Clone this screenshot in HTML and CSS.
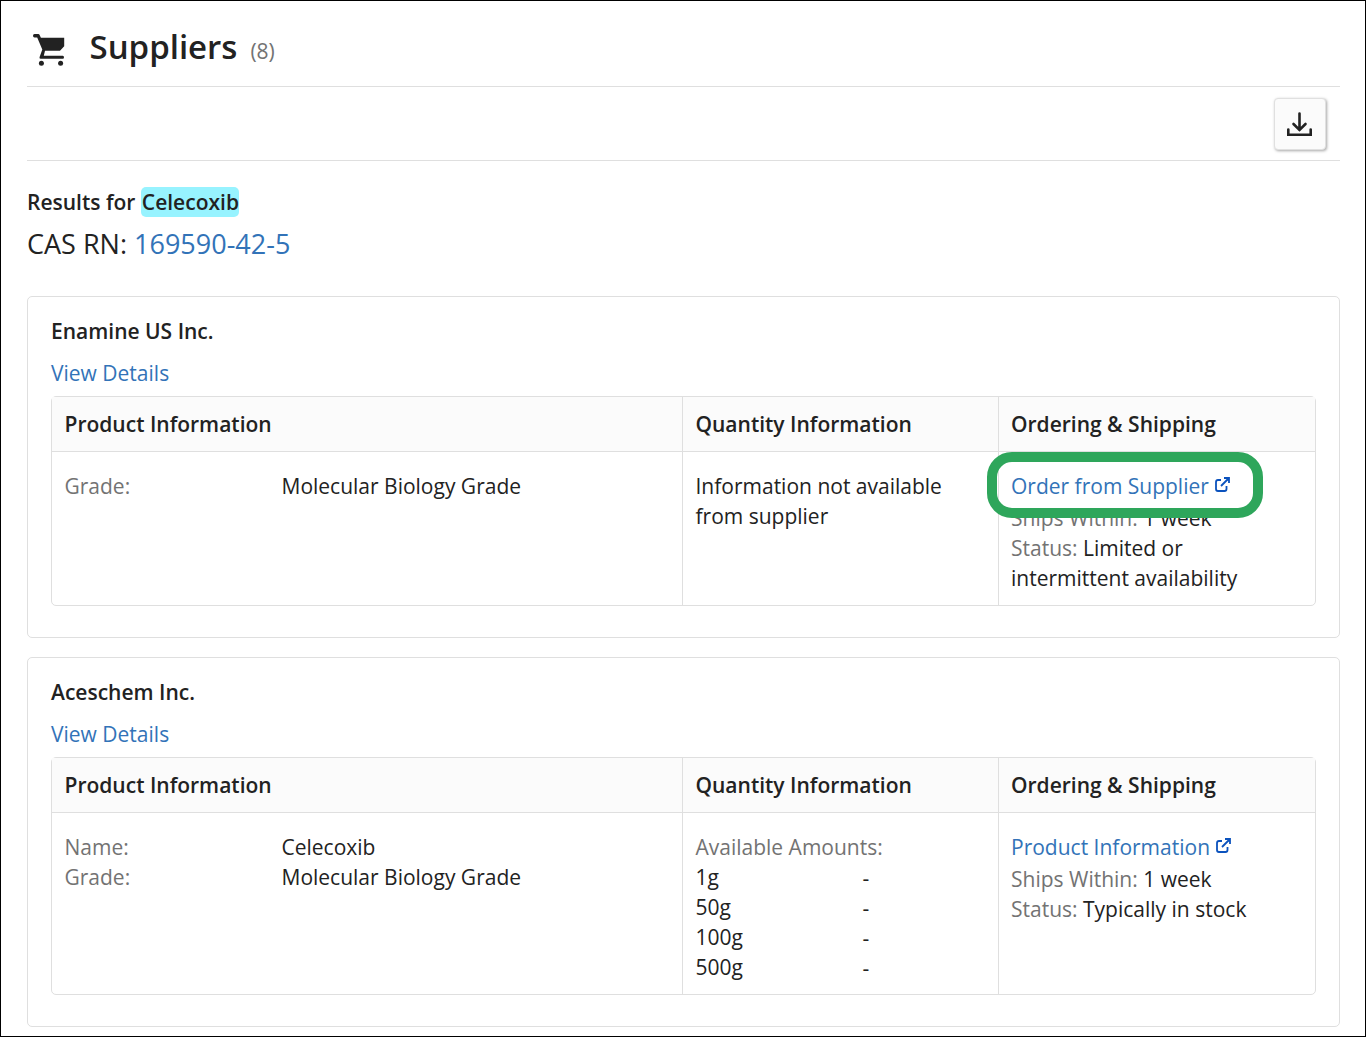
FILE: index.html
```html
<!DOCTYPE html>
<html lang="en">
<head>
    <meta charset="UTF-8">
    <meta name="viewport" content="width=device-width, initial-scale=1.0">
    <title>Suppliers</title>
    <link rel="stylesheet" href="styles.css">
</head>
<body>
    <div class="page">
        <header class="page-header">
            <svg class="cart-icon" viewBox="0 0 32 32">
                <path d="M1.5 0H5.3Q6.2 0 6.5 0.8L7.9 3.8H31.2V12.2L27 16.7H12L10.8 21.7H29.8Q31 21.7 31 23.2Q31 24.7 29.8 24.7H7.5Q6 24.7 6.6 23L9.3 15.5L4.2 3.4H1.5Q0 3.4 0 1.7Q0 0 1.5 0Z"/>
                <circle cx="8.4" cy="29.3" r="2.5"/>
                <circle cx="27.6" cy="29.3" r="2.5"/>
            </svg>
            <h1 class="title">Suppliers</h1>
            <span class="count">(8)</span>
        </header>

        <div class="toolbar">
            <button class="download-button">
                <svg class="download-icon" viewBox="0 0 25 25">
                    <path d="M12.5 1.5V18M6.5 12L12.5 18L18.5 12"/>
                    <path d="M1.3 17.5V22.7H23.7V17.5"/>
                </svg>
            </button>
        </div>

        <p class="results">Results for <span class="highlight">Celecoxib</span></p>
        <p class="cas">CAS RN: <a class="link">169590-42-5</a></p>

        <section class="card">
            <h2 class="supplier">Enamine US Inc.</h2>
            <a class="link details">View Details</a>
            <div class="table">
                <div class="row head">
                    <div class="cell">Product Information</div>
                    <div class="cell">Quantity Information</div>
                    <div class="cell">Ordering &amp; Shipping</div>
                </div>
                <div class="row">
                    <div class="cell">
                        <div class="field"><span class="label">Grade:</span><span>Molecular Biology Grade</span></div>
                    </div>
                    <div class="cell">Information not available from supplier</div>
                    <div class="cell">
                        <div class="order">
                            <a class="link">Order from Supplier</a>
                            <svg class="ext-icon" viewBox="0 0 15 15">
                                <path d="M6 3H3Q1 3 1 5V12Q1 14 3 14H9.5Q11.5 14 11.5 12V9M9 1H14V6M14 1L6 9"/>
                            </svg>
                            <div class="callout"></div>
                        </div>
                        <div><span class="label">Ships Within:</span> 1 week</div>
                        <div><span class="label">Status:</span> Limited or intermittent availability</div>
                    </div>
                </div>
            </div>
        </section>

        <section class="card">
            <h2 class="supplier">Aceschem Inc.</h2>
            <a class="link details">View Details</a>
            <div class="table">
                <div class="row head">
                    <div class="cell">Product Information</div>
                    <div class="cell">Quantity Information</div>
                    <div class="cell">Ordering &amp; Shipping</div>
                </div>
                <div class="row">
                    <div class="cell">
                        <div class="field"><span class="label">Name:</span><span>Celecoxib</span></div>
                        <div class="field"><span class="label">Grade:</span><span>Molecular Biology Grade</span></div>
                    </div>
                    <div class="cell">
                        <div class="label">Available Amounts:</div>
                        <div class="amount"><span>1g</span><span class="price">-</span></div>
                        <div class="amount"><span>50g</span><span class="price">-</span></div>
                        <div class="amount"><span>100g</span><span class="price">-</span></div>
                        <div class="amount"><span>500g</span><span class="price">-</span></div>
                    </div>
                    <div class="cell">
                        <div class="order">
                            <a class="link">Product Information</a>
                            <svg class="ext-icon" viewBox="0 0 15 15">
                                <path d="M6 3H3Q1 3 1 5V12Q1 14 3 14H9.5Q11.5 14 11.5 12V9M9 1H14V6M14 1L6 9"/>
                            </svg>
                        </div>
                        <div><span class="label">Ships Within:</span> 1 week</div>
                        <div><span class="label">Status:</span> Typically in stock</div>
                    </div>
                </div>
            </div>
        </section>
    </div>
</body>
</html>
```
FILE: styles.css
```css
*{
    box-sizing: border-box;
}
body{
    margin: 0;
    background-color: white;
    color: #222;
    font-family: "Open Sans", "Noto Sans", sans-serif;
    font-size: 21px;
    line-height: 30px;
}
h1, h2, p{
    margin: 0;
}
.page{
    height: 1037px;
    border: 1px solid black;
    padding: 0 25px 0 26px;
    overflow: hidden;
}
.link{
    color: #3273b8;
}
.label{
    color: #737373;
}

/* header */
.page-header{
    display: flex;
    align-items: center;
    height: 86px;
    padding: 6px 0 0 6px;
    border-bottom: 1px solid #dfdfdf;
}
.cart-icon{
    width: 32px;
    height: 32px;
    margin-top: 7px;
    fill: #222;
}
.title{
    margin-left: 24.5px;
    font-size: 33px;
    font-weight: 600;
    line-height: 46px;
}
.count{
    margin: 9px 0 0 13px;
    color: #737373;
}
.toolbar{
    display: flex;
    justify-content: flex-end;
    height: 74px;
    padding: 11px 14px 0 0;
    border-bottom: 1px solid #dfdfdf;
}
.download-button{
    display: flex;
    align-items: center;
    justify-content: center;
    width: 52px;
    height: 52px;
    padding: 0 1px 0 0;
    border: 1px solid #e0e0e0;
    border-radius: 4px;
    background-color: #fbfbfb;
    box-shadow: 1px 1px 3px rgba(0, 0, 0, 0.35);
}
.download-icon{
    width: 25px;
    height: 25px;
    fill: none;
    stroke: #222;
    stroke-width: 2.6;
    stroke-linecap: round;
}

/* results */
.results{
    margin-top: 26px;
    font-weight: 600;
}
.highlight{
    display: inline-block;
    padding: 0 0.5px 0 1px;
    border-radius: 5px;
    background-color: #97f3ff;
}
.cas{
    margin: 8px 0 34px;
    font-size: 27px;
    line-height: 37px;
}

/* supplier cards */
.card{
    margin-bottom: 19px;
    padding: 19px 23px 31px;
    border: 1px solid #dfdfdf;
    border-radius: 5px;
}
.supplier{
    font-size: 21px;
    font-weight: 600;
}
.details{
    display: block;
    margin: 12px 0 8px;
}
.table{
    border: 1px solid #dfdfdf;
    border-radius: 5px;
}
.row{
    display: grid;
    grid-template-columns: 630px 316px 1fr;
}
.cell{
    padding: 19px 12px 12px 12.5px;
}
.cell + .cell{
    border-left: 1px solid #dfdfdf;
}
.cell:last-child{
    padding-left: 12px;
}
.head{
    border-bottom: 1px solid #dfdfdf;
    background-color: #fbfbfb;
    font-weight: 600;
}
.head .cell{
    padding-top: 12px;
    padding-bottom: 12px;
}
.field{
    display: grid;
    grid-template-columns: 217px 1fr;
}
.amount{
    display: grid;
    grid-template-columns: 167px 1fr;
    height: 30px;
}
.price{
    padding-top: 1px;
}
.order{
    position: relative;
    display: flex;
    align-items: center;
    gap: 6px;
    margin-bottom: 2px;
}
.ext-icon{
    width: 15px;
    height: 15px;
    margin-top: -3px;
    fill: none;
    stroke: #0b52bd;
    stroke-width: 1.8;
}

/* green marker round the order link */
.callout{
    position: absolute;
    top: -19px;
    left: -24px;
    width: 276px;
    height: 66px;
    border: 10px solid #2ea65b;
    border-radius: 25px;
}
```
